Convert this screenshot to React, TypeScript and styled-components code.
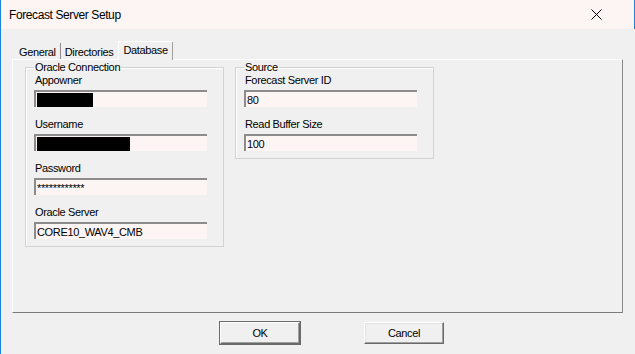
import React from "react";
import styled, { createGlobalStyle } from "styled-components";

const Global = createGlobalStyle`
  html, body { margin: 0; padding: 0; background: #f0f0f0; }
  * { box-sizing: border-box; }
`;

const Window = styled.div`
  width: 635px;
  height: 354px;
  display: flex;
  flex-direction: column;
  border-left: 1px solid #1a84dc;
  background: #f0f0f0;
  font-family: "Liberation Sans", Arial, sans-serif;
  font-size: 11px;
  letter-spacing: -0.35px;
  color: #000;
  overflow: hidden;
`;

const TitleBar = styled.div`
  height: 29px;
  flex: none;
  display: flex;
  align-items: center;
  justify-content: space-between;
  padding: 0 0 0 8px;
  background: #fdf4f4;
  border-right: 1px solid #1a84dc;
`;

const Title = styled.span`
  font-size: 12px;
  letter-spacing: -0.4px;
  line-height: 14px;
  margin-top: 1px;
`;

const CloseButton = styled.div`
  width: 46px;
  height: 29px;
  display: flex;
  align-items: center;
  justify-content: center;
  margin-right: 15px;
`;

const Body = styled.div`
  flex: 1;
  display: flex;
  flex-direction: column;
  padding: 12px 0 0 11px;
`;

const TabStrip = styled.div`
  height: 18px;
  display: flex;
  align-items: flex-end;
  padding-left: 4px;
  position: relative;
  z-index: 1;
`;

const Tab = styled.div<{ $active?: boolean }>`
  line-height: 13px;
  white-space: nowrap;
  ${(p) =>
    p.$active
      ? `
    height: 19px;
    margin-bottom: -1px;
    padding: 2px 4px 0 4px;
    background: #f0f0f0;
    border-top: 1px solid #ffffff;
    border-left: 1px solid #ffffff;
    border-right: 1px solid #696969;
    box-shadow: inset -1px 0 0 #a0a0a0;
  `
      : `
    height: 16px;
    padding: 3px 4px 0 3px;
    border-right: 1px solid #8c8c8c;
    & + & { padding-left: 4px; padding-right: 5px; border-right: none; }
  `}
`;

const Panel = styled.div`
  width: 611px;
  height: 254px;
  border-top: 1px solid #ffffff;
  border-left: 1px solid #ffffff;
  border-right: 1px solid #8a8a8a;
  border-bottom: 1px solid #7a7a7a;
  padding: 1px 0 0 12px;
  display: flex;
  align-items: flex-start;
  gap: 11px;
`;

const Group = styled.fieldset`
  width: 199px;
  margin: 0;
  padding: 0 0 7px 8px;
  border: 1px solid #d2d2d2;
  box-shadow: inset 1px 1px 0 #ffffff;
  display: flex;
  flex-direction: column;
  gap: 10px;
  min-width: 0;
`;

const Legend = styled.legend`
  margin-left: 0;
  padding: 0 1px;
  line-height: 12px;
  font-size: 11px;
`;

const Field = styled.div`
  display: flex;
  flex-direction: column;
`;

const Label = styled.label`
  line-height: 14px;
  padding-left: 1px;
  margin-bottom: 3px;
`;

const Input = styled.div`
  width: 173px;
  height: 17px;
  background: #fdf4f4;
  border-top: 2px solid #8c8c8c;
  border-left: 2px solid #8c8c8c;
  padding: 1px 0 0 1px;
  line-height: 13px;
  font-size: 11px;
  white-space: nowrap;
  display: flex;
  align-items: center;
`;

const Redacted = styled.div<{ $w: number }>`
  width: ${(p) => p.$w}px;
  height: 14px;
  background: #000;
  margin-top: -1px;
`;

const ButtonRow = styled.div`
  display: flex;
  gap: 64px;
  padding: 9px 0 0 208px;
`;

const Button = styled.div<{ $default?: boolean }>`
  width: 80px;
  height: 22px;
  display: flex;
  align-items: center;
  justify-content: center;
  background: #f0f0f0;
  border-top: 1px solid #ffffff;
  border-left: 1px solid #ffffff;
  border-right: 1px solid #696969;
  border-bottom: 1px solid #696969;
  box-shadow: ${(p) =>
    p.$default
      ? "0 0 0 1px #6a6a6a, inset -1px -1px 0 #a0a0a0"
      : "inset -1px -1px 0 #a0a0a0, inset 1px 1px 0 #e3e3e3"};
  line-height: 13px;
`;

const Fields: { label: string; value?: string; redact?: number }[] = [
  { label: "Appowner", redact: 56 },
  { label: "Username", redact: 93 },
  { label: "Password", value: "************" },
  { label: "Oracle Server", value: "CORE10_WAV4_CMB" },
];

const SourceFields = [
  { label: "Forecast Server ID", value: "80" },
  { label: "Read Buffer Size", value: "100" },
];

export default function App() {
  return (
    <>
      <Global />
      <Window>
        <TitleBar>
          <Title>Forecast Server Setup</Title>
          <CloseButton>
            <svg width="11" height="11" viewBox="0 0 11 11">
              <path d="M0.5 0.5 L10.5 10.5 M10.5 0.5 L0.5 10.5" stroke="#000" strokeWidth="1" />
            </svg>
          </CloseButton>
        </TitleBar>
        <Body>
          <TabStrip>
            <Tab>General</Tab>
            <Tab>Directories</Tab>
            <Tab $active>Database</Tab>
          </TabStrip>
          <Panel>
            <Group>
              <Legend>Oracle Connection</Legend>
              {Fields.map((f) => (
                <Field key={f.label}>
                  <Label>{f.label}</Label>
                  <Input>{f.redact ? <Redacted $w={f.redact} /> : f.value}</Input>
                </Field>
              ))}
            </Group>
            <Group>
              <Legend>Source</Legend>
              {SourceFields.map((f) => (
                <Field key={f.label}>
                  <Label>{f.label}</Label>
                  <Input>{f.value}</Input>
                </Field>
              ))}
            </Group>
          </Panel>
          <ButtonRow>
            <Button $default>OK</Button>
            <Button>Cancel</Button>
          </ButtonRow>
        </Body>
      </Window>
    </>
  );
}
